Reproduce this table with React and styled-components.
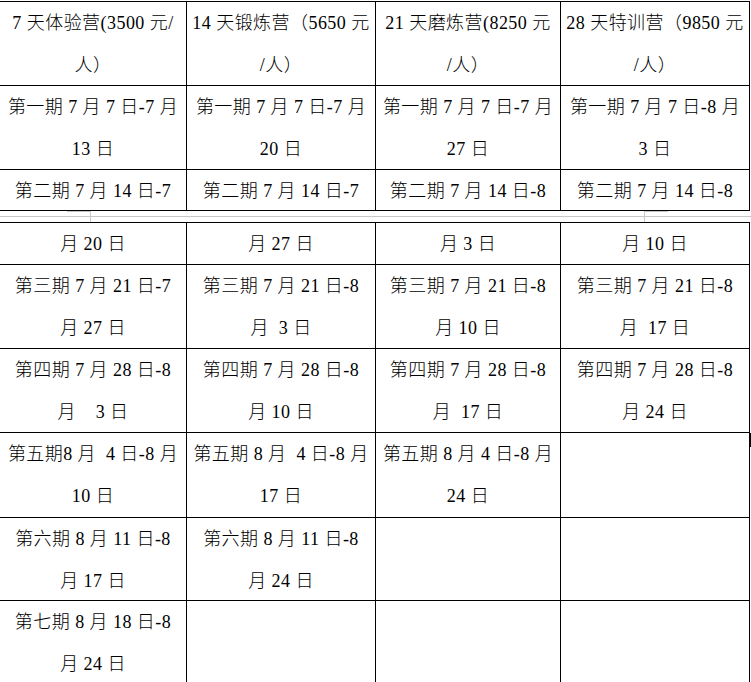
import React from "react";
import styled, { createGlobalStyle } from "styled-components";

const GlobalStyle = createGlobalStyle`
  html, body {
    margin: 0;
    padding: 0;
    background: #ffffff;
  }
  body {
    font-family: "Liberation Serif", "Noto Sans CJK SC", serif;
    color: #000;
    overflow: hidden;
  }
`;

const Page = styled.div`
  width: 751px;
  height: 682px;
  padding-top: 1px;
  box-sizing: border-box;
  overflow: hidden;
`;

const Table = styled.div`
  display: grid;
  grid-template-columns: 187px 189px 185px 189px;
  width: 750px;
  border-top: 1px solid #000;
  position: relative;
`;

const Cell = styled.div`
  box-sizing: border-box;
  height: ${(p) => p.h}px;
  border-right: 1px solid #000;
  border-bottom: 1px solid #000;
  display: flex;
  flex-direction: column;
  align-items: center;
  font-size: 18px;
  font-weight: 300;
  letter-spacing: 0.45px;
  line-height: 42px;
  white-space: pre;
  overflow: hidden;
`;

const Line = styled.div`
  height: 42px;
  flex: none;
`;

// word's page-break gap between the two table fragments
const PageBreak = styled.div`
  height: 11px;
  display: flex;
  justify-content: space-between;
  padding: 0 83px 0 67px;
  background: linear-gradient(#c8c8c8, #c8c8c8) 0 5px / 100% 1px no-repeat;
`;

const BreakMark = styled.div`
  width: 23px;
  height: 10px;
  border-top: 1px solid #c8c8c8;
  border-${(p) => p.side}: 1px solid #c8c8c8;
`;

const EdgeMark = styled.div`
  position: absolute;
  right: -2px;
  top: ${(p) => p.y}px;
  width: 2px;
  height: 14px;
  background: #000;
`;

const topRows = [
  {
    h: 84,
    cells: [
      ["7 天体验营(3500 元/", "人）"],
      ["14 天锻炼营（5650 元", "/人）"],
      ["21 天磨炼营(8250 元", "/人）"],
      ["28 天特训营（9850 元", "/人）"],
    ],
  },
  {
    h: 84,
    cells: [
      ["第一期 7 月 7 日-7 月", "13 日"],
      ["第一期 7 月 7 日-7 月", "20 日"],
      ["第一期 7 月 7 日-7 月", "27 日"],
      ["第一期 7 月 7 日-8 月", "3 日"],
    ],
  },
  {
    h: 41,
    cells: [
      ["第二期 7 月 14 日-7"],
      ["第二期 7 月 14 日-7"],
      ["第二期 7 月 14 日-8"],
      ["第二期 7 月 14 日-8"],
    ],
  },
];

const bottomRows = [
  {
    h: 42,
    cells: [["月 20 日"], ["月 27 日"], ["月 3 日"], ["月 10 日"]],
  },
  {
    h: 84,
    cells: [
      ["第三期 7 月 21 日-7", "月 27 日"],
      ["第三期 7 月 21 日-8", "月  3 日"],
      ["第三期 7 月 21 日-8", "月 10 日"],
      ["第三期 7 月 21 日-8", "月  17 日"],
    ],
  },
  {
    h: 84,
    cells: [
      ["第四期 7 月 28 日-8", "月    3 日"],
      ["第四期 7 月 28 日-8", "月 10 日"],
      ["第四期 7 月 28 日-8", "月  17 日"],
      ["第四期 7 月 28 日-8", "月 24 日"],
    ],
  },
  {
    h: 85,
    cells: [
      ["第五期8 月  4 日-8 月", "10 日"],
      ["第五期 8 月  4 日-8 月", "17 日"],
      ["第五期 8 月 4 日-8 月", "24 日"],
      [],
    ],
  },
  {
    h: 83,
    cells: [
      ["第六期 8 月 11 日-8", "月 17 日"],
      ["第六期 8 月 11 日-8", "月 24 日"],
      [],
      [],
    ],
  },
  {
    h: 84,
    cells: [["第七期 8 月 18 日-8", "月 24 日"], [], [], []],
  },
];

function Rows({ rows }) {
  return rows.map((row, r) =>
    row.cells.map((lines, c) => (
      <Cell key={`${r}-${c}`} h={row.h}>
        {lines.map((t, i) => (
          <Line key={i}>{t}</Line>
        ))}
      </Cell>
    ))
  );
}

export default function App() {
  return (
    <Page>
      <GlobalStyle />
      <Table>
        <Rows rows={topRows} />
      </Table>
      <PageBreak>
        <BreakMark side="right" />
        <BreakMark side="left" />
      </PageBreak>
      <Table>
        <Rows rows={bottomRows} />
        <EdgeMark y={210} />
      </Table>
    </Page>
  );
}
